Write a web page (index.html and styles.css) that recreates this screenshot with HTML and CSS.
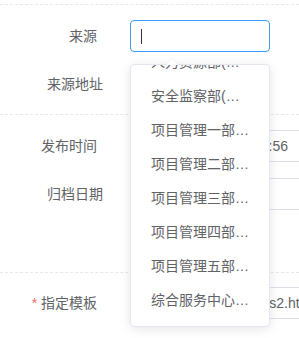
FILE: index.html
```html
<!DOCTYPE html>
<html lang="zh-CN">
<head>
    <meta charset="UTF-8">
    <title>编辑</title>
    <link rel="stylesheet" href="styles.css">
</head>
<body>
    <div class="form">
        <div class="section">
            <div class="row">
                <label class="label">来源</label>
                <div class="field field-short is-focus"><span class="caret"></span></div>
            </div>
            <div class="row">
                <label class="label label-wide">来源地址</label>
                <div class="field field-short"></div>
            </div>
        </div>
        <div class="section section-tall">
            <div class="row">
                <label class="label">发布时间</label>
                <div class="field field-long field-date">2023-06-01 14:23:56</div>
            </div>
            <div class="row">
                <label class="label label-wide">归档日期</label>
                <div class="field field-long field-date"></div>
            </div>
        </div>
        <div class="section section-last">
            <div class="row">
                <label class="label"><span class="star">*</span> 指定模板</label>
                <div class="field field-long field-text">template/article-news2.html</div>
            </div>
        </div>

        <div class="dropdown">
            <span class="arrow"></span>
            <div class="dropdown-wrap">
                <ul class="dropdown-list">
                    <li>人力资源部(人事处)</li>
                    <li>安全监察部(安监处)</li>
                    <li>项目管理一部(工程)</li>
                    <li>项目管理二部(工程)</li>
                    <li>项目管理三部(工程)</li>
                    <li>项目管理四部(工程)</li>
                    <li>项目管理五部(工程)</li>
                    <li>综合服务中心(后勤)</li>
                </ul>
            </div>
        </div>
    </div>
</body>
</html>
```

FILE: styles.css
```css
*{
    padding:0;
    margin:0;
    box-sizing:border-box;
}
html,body{
    background:#fff;
    overflow:hidden;
}
body{
    font-family:"Liberation Sans","Noto Sans CJK SC",sans-serif;
    font-size:14px;
    color:#606266;
}
.form{
    position:relative;
    width:299px;
    height:338px;
    padding-top:4px;
}
.section{
    border-top:1px dashed #e4e7ed;
    padding:15px 0 14px;
}
.section-tall{
    padding-bottom:62px;
}
.section-last{
    padding-top:14px;
}
.row{
    display:flex;
    align-items:center;
    height:32px;
    margin-bottom:16px;
}
.row:last-child{
    margin-bottom:0;
}
.label{
    flex:none;
    width:130px;
    padding-right:33px;
    text-align:right;
    line-height:32px;
}
.label-wide{
    padding-right:27px;
}
.star{
    color:#f56c6c;
}
.field{
    flex:none;
    height:32px;
    border:1px solid #dcdfe6;
    border-radius:4px;
    display:flex;
    align-items:center;
    white-space:nowrap;
    overflow:hidden;
}
.field-short{
    width:140px;
}
.field-long{
    width:220px;
}
.field-date{
    padding-left:27px;
}
.field-text{
    padding-left:13px;
}
.is-focus{
    border-color:#409eff;
    padding-left:10px;
}
.caret{
    width:1px;
    height:15px;
    background:#303133;
}
.dropdown{
    position:absolute;
    left:130px;
    top:64px;
    width:140px;
    height:263px;
    background:#fff;
    border:1px solid #e4e7ed;
    border-radius:4px;
    box-shadow:0 2px 12px 0 rgba(0,0,0,.1);
}
.arrow{
    position:absolute;
    top:-7px;
    left:35px;
    width:0;
    height:0;
    border:6px solid transparent;
    border-top:0;
    border-bottom-color:#ebeef5;
}
.arrow::after{
    content:"";
    position:absolute;
    top:1px;
    left:-6px;
    border:6px solid transparent;
    border-top:0;
    border-bottom-color:#fff;
}
.dropdown-wrap{
    height:100%;
    overflow:hidden;
}
.dropdown-list{
    list-style:none;
    margin-top:-20px;
}
.dropdown-list li{
    height:34px;
    line-height:34px;
    padding:0 20px;
    white-space:nowrap;
    overflow:hidden;
    text-overflow:ellipsis;
}
```
